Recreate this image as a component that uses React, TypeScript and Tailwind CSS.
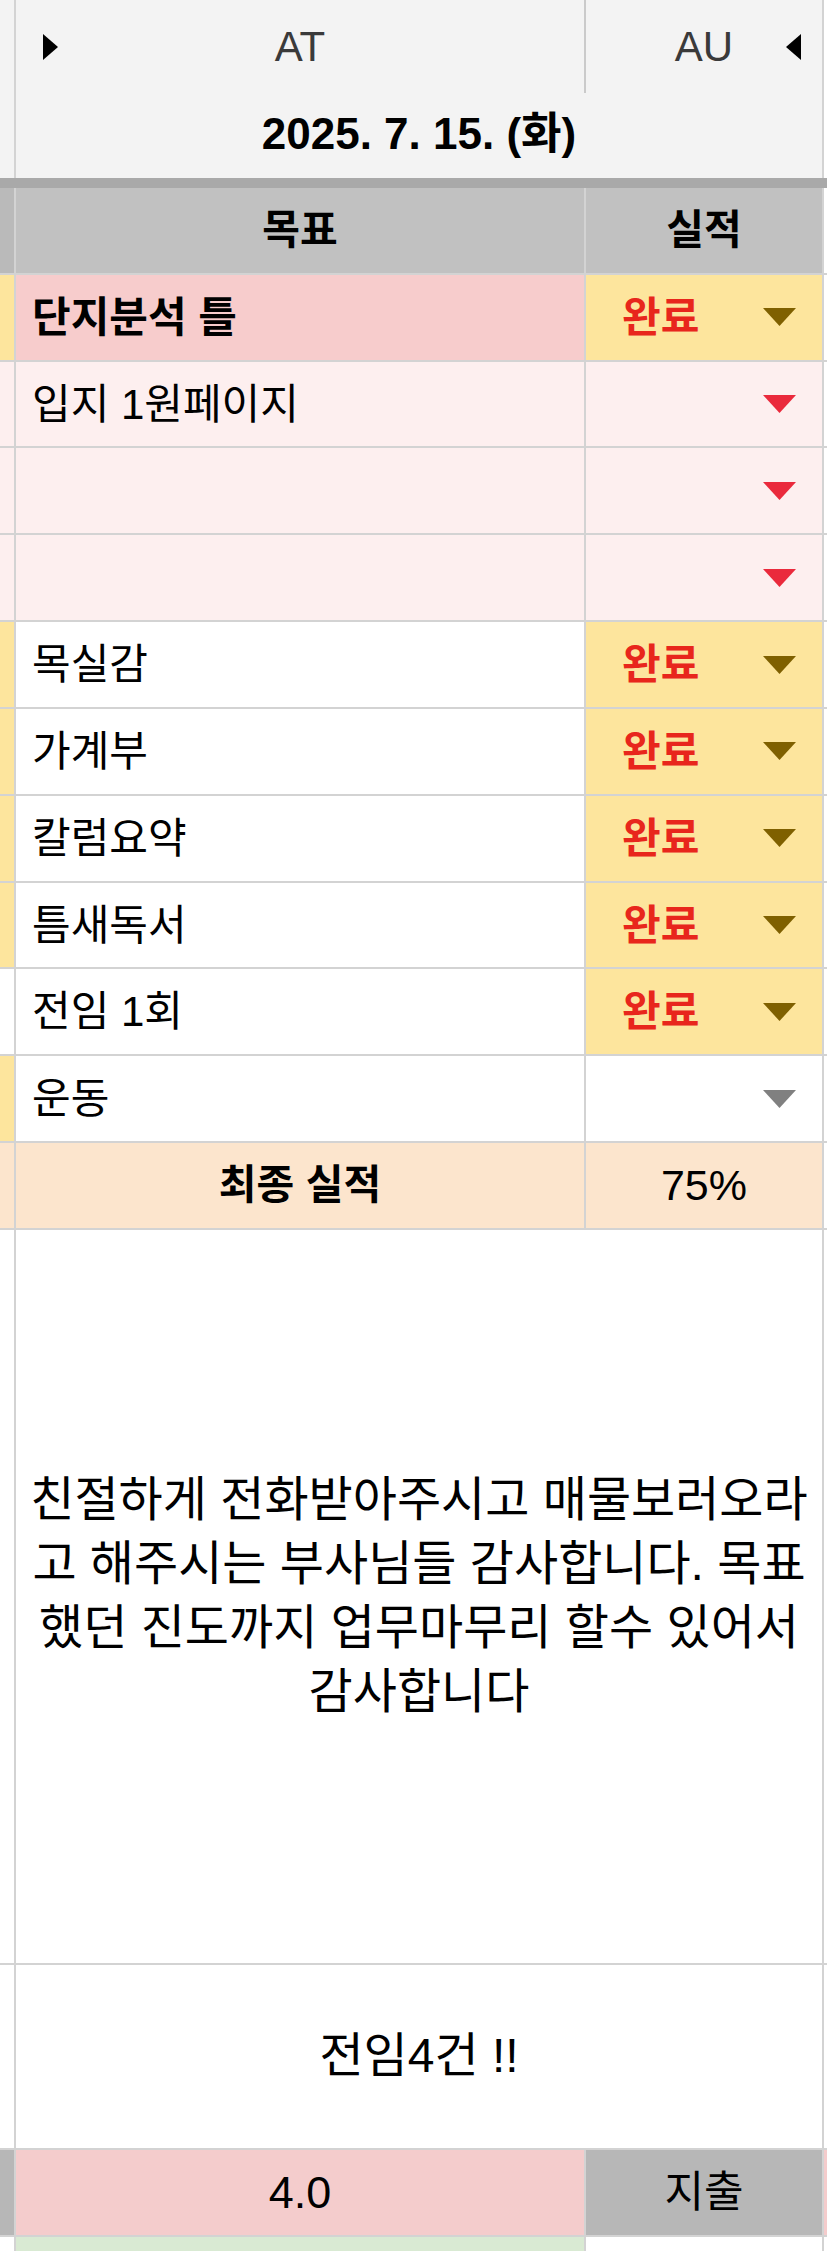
const LINE = 'border-[#d3d3d3]';
const YELLOW = 'bg-[#fde59d]';
const SOFT_PINK = 'bg-[#fdefef]';
const OLIVE = '#7f6000';
const RED_ARROW = '#ea2a3c';
const GREY_ARROW = '#808080';

type Item = {
  goal: string;
  bold?: boolean;
  strip: string;
  goalBg: string;
  resBg: string;
  done?: boolean;
  arrow: string;
};

const items: Item[] = [
  { goal: '단지분석 틀', bold: true, strip: YELLOW, goalBg: 'bg-[#f7cccc]', resBg: YELLOW, done: true, arrow: OLIVE },
  { goal: '입지 1원페이지', strip: SOFT_PINK, goalBg: SOFT_PINK, resBg: SOFT_PINK, arrow: RED_ARROW },
  { goal: '', strip: SOFT_PINK, goalBg: SOFT_PINK, resBg: SOFT_PINK, arrow: RED_ARROW },
  { goal: '', strip: SOFT_PINK, goalBg: SOFT_PINK, resBg: SOFT_PINK, arrow: RED_ARROW },
  { goal: '목실감', strip: YELLOW, goalBg: 'bg-white', resBg: YELLOW, done: true, arrow: OLIVE },
  { goal: '가계부', strip: YELLOW, goalBg: 'bg-white', resBg: YELLOW, done: true, arrow: OLIVE },
  { goal: '칼럼요약', strip: YELLOW, goalBg: 'bg-white', resBg: YELLOW, done: true, arrow: OLIVE },
  { goal: '틈새독서', strip: YELLOW, goalBg: 'bg-white', resBg: YELLOW, done: true, arrow: OLIVE },
  { goal: '전임 1회', strip: 'bg-white', goalBg: 'bg-white', resBg: YELLOW, done: true, arrow: OLIVE },
  { goal: '운동', strip: YELLOW, goalBg: 'bg-white', resBg: 'bg-white', arrow: GREY_ARROW },
];

function Caret({ color }: { color: string }) {
  return (
    <svg width="33" height="18" viewBox="0 0 33 18">
      <polygon points="0,0 33,0 16.5,18" fill={color} />
    </svg>
  );
}

function Row({ item }: { item: Item }) {
  return (
    <div className={`flex h-[86.83px] border-b-2 ${LINE}`}>
      <div className={`w-[14px] ${item.strip}`} />
      <div
        className={`flex w-[570px] items-center border-l-2 ${LINE} pl-[16px] text-[42px] ${item.bold ? 'font-bold' : ''} ${item.goalBg}`}
      >
        {item.goal}
      </div>
      <div
        className={`flex w-[238px] items-center justify-between border-l-2 ${LINE} pl-[36px] pr-[26px] ${item.resBg}`}
      >
        <span className="text-[42px] font-bold text-[#e8261c]">{item.done ? '완료' : ''}</span>
        <Caret color={item.arrow} />
      </div>
      <div className={`flex-1 border-l-2 ${LINE} bg-white`} />
    </div>
  );
}

export default function App() {
  return (
    <div className="w-[827px] overflow-hidden bg-white font-['Liberation_Sans','Noto_Sans_CJK_KR',sans-serif] text-black">
      {/* column letters + date */}
      <div className="flex h-[178px] bg-[#f3f3f3]">
        <div className="w-[14px]" />
        <div className={`flex w-[808px] flex-col border-l-2 ${LINE}`}>
          <div className="flex h-[93px]">
            <div className="relative flex w-[568px] items-center justify-center text-[42px] text-[#3a3a3a]">
              <svg className="absolute left-[27px] top-[34px]" width="15" height="26" viewBox="0 0 15 26">
                <polygon points="0,0 15,13 0,26" fill="#000" />
              </svg>
              AT
            </div>
            <div className="w-[2px] bg-[#cacaca]" />
            <div className="relative flex flex-1 items-center justify-center text-[42px] text-[#3a3a3a]">
              AU
              <svg className="absolute right-[21px] top-[34px]" width="15" height="26" viewBox="0 0 15 26">
                <polygon points="15,0 0,13 15,26" fill="#000" />
              </svg>
            </div>
          </div>
          <div className="flex flex-1 items-center justify-center pb-[4px] text-[44px] font-bold">
            2025. 7. 15. (화)
          </div>
        </div>
        <div className={`flex-1 border-l-2 ${LINE} bg-white`} />
      </div>
      <div className="h-[10px] bg-[#a9a9a9]" />

      {/* header */}
      <div className={`flex h-[86.83px] border-b-2 ${LINE} bg-[#c1c1c1]`}>
        <div className="w-[14px] bg-[#bababa]" />
        <div className={`flex w-[570px] items-center justify-center border-l-2 ${LINE} text-[41px] font-bold`}>
          목표
        </div>
        <div className={`flex w-[238px] items-center justify-center border-l-2 ${LINE} text-[41px] font-bold`}>
          실적
        </div>
        <div className={`flex-1 border-l-2 ${LINE} bg-white`} />
      </div>

      {items.map((item, i) => (
        <Row key={i} item={item} />
      ))}

      {/* total */}
      <div className={`flex h-[86.83px] border-b-2 ${LINE} bg-[#fce5cd]`}>
        <div className="w-[14px]" />
        <div className={`flex w-[570px] items-center justify-center border-l-2 ${LINE} text-[41px] font-bold`}>
          최종 실적
        </div>
        <div className={`flex w-[238px] items-center justify-center border-l-2 ${LINE} text-[43px]`}>
          75%
        </div>
        <div className={`flex-1 border-l-2 ${LINE} bg-white`} />
      </div>

      {/* note */}
      <div className={`flex h-[735px] border-b-2 ${LINE}`}>
        <div className="w-[14px]" />
        <div className={`flex w-[808px] items-center justify-center border-l-2 ${LINE} text-center text-[48px] leading-[64px]`}>
          <p>
            친절하게 전화받아주시고 매물보러오라
            <br />
            고 해주시는 부사님들 감사합니다. 목표
            <br />
            했던 진도까지 업무마무리 할수 있어서
            <br />
            감사합니다
          </p>
        </div>
        <div className={`flex-1 border-l-2 ${LINE}`} />
      </div>

      <div className={`flex h-[185px] border-b-2 ${LINE}`}>
        <div className="w-[14px]" />
        <div className={`flex w-[808px] items-center justify-center border-l-2 ${LINE} text-[48px]`}>
          전임4건 !!
        </div>
        <div className={`flex-1 border-l-2 ${LINE}`} />
      </div>

      {/* expense */}
      <div className={`flex h-[87px] border-b-2 ${LINE}`}>
        <div className="w-[14px] bg-[#b7b7b7]" />
        <div className={`flex w-[570px] items-center justify-center border-l-2 ${LINE} bg-[#f4cccc] text-[45px]`}>
          4.0
        </div>
        <div className={`flex w-[238px] items-center justify-center border-l-2 ${LINE} bg-[#b7b7b7] text-[43px]`}>
          지출
        </div>
        <div className={`flex-1 border-l-2 ${LINE} bg-[#f4cccc]`} />
      </div>

      <div className="flex h-[87px]">
        <div className="w-[14px]" />
        <div className={`w-[570px] border-l-2 ${LINE} bg-[#d9ead3]`} />
        <div className={`w-[238px] border-l-2 ${LINE}`} />
        <div className={`flex-1 border-l-2 ${LINE}`} />
      </div>
    </div>
  );
}
